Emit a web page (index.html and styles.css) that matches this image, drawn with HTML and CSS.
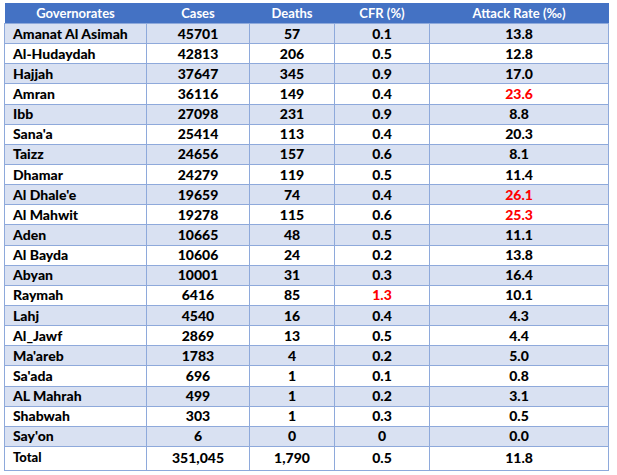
FILE: index.html
```html
<!DOCTYPE html>
<html>
<head>
<meta charset="utf-8">
<link rel="stylesheet" href="styles.css">
</head>
<body>
<table class="data">
  <colgroup>
    <col class="c-name"><col class="c-cases"><col class="c-deaths"><col class="c-cfr"><col class="c-ar">
  </colgroup>
  <thead>
    <tr class="head">
      <th>Governorates</th><th>Cases</th><th>Deaths</th><th>CFR (%)</th><th>Attack Rate (‰)</th>
    </tr>
  </thead>
  <tbody>
    <tr class="band"><td>Amanat Al Asimah</td><td>45701</td><td>57</td><td>0.1</td><td>13.8</td></tr>
    <tr><td>Al-Hudaydah</td><td>42813</td><td>206</td><td>0.5</td><td>12.8</td></tr>
    <tr class="band"><td>Hajjah</td><td>37647</td><td>345</td><td>0.9</td><td>17.0</td></tr>
    <tr><td>Amran</td><td>36116</td><td>149</td><td>0.4</td><td class="hot">23.6</td></tr>
    <tr class="band"><td>Ibb</td><td>27098</td><td>231</td><td>0.9</td><td>8.8</td></tr>
    <tr><td>Sana'a</td><td>25414</td><td>113</td><td>0.4</td><td>20.3</td></tr>
    <tr class="band"><td>Taizz</td><td>24656</td><td>157</td><td>0.6</td><td>8.1</td></tr>
    <tr><td>Dhamar</td><td>24279</td><td>119</td><td>0.5</td><td>11.4</td></tr>
    <tr class="band"><td>Al Dhale'e</td><td>19659</td><td>74</td><td>0.4</td><td class="hot">26.1</td></tr>
    <tr><td>Al Mahwit</td><td>19278</td><td>115</td><td>0.6</td><td class="hot">25.3</td></tr>
    <tr class="band"><td>Aden</td><td>10665</td><td>48</td><td>0.5</td><td>11.1</td></tr>
    <tr><td>Al Bayda</td><td>10606</td><td>24</td><td>0.2</td><td>13.8</td></tr>
    <tr class="band"><td>Abyan</td><td>10001</td><td>31</td><td>0.3</td><td>16.4</td></tr>
    <tr><td>Raymah</td><td>6416</td><td>85</td><td class="hot">1.3</td><td>10.1</td></tr>
    <tr class="band"><td>Lahj</td><td>4540</td><td>16</td><td>0.4</td><td>4.3</td></tr>
    <tr><td>Al_Jawf</td><td>2869</td><td>13</td><td>0.5</td><td>4.4</td></tr>
    <tr class="band"><td>Ma'areb</td><td>1783</td><td>4</td><td>0.2</td><td>5.0</td></tr>
    <tr><td>Sa'ada</td><td>696</td><td>1</td><td>0.1</td><td>0.8</td></tr>
    <tr class="band"><td>AL Mahrah</td><td>499</td><td>1</td><td>0.2</td><td>3.1</td></tr>
    <tr><td>Shabwah</td><td>303</td><td>1</td><td>0.3</td><td>0.5</td></tr>
    <tr class="band"><td>Say'on</td><td>6</td><td>0</td><td>0</td><td>0.0</td></tr>
    <tr class="total"><td>Total</td><td>351,045</td><td>1,790</td><td>0.5</td><td>11.8</td></tr>
  </tbody>
</table>
</body>
</html>
```

FILE: styles.css
```css
html, body {
  margin: 0;
  padding: 0;
  background: #ffffff;
}

body {
  padding: 3px 0 0 4px;
  font-family: Lato, "Open Sans", "Liberation Sans", sans-serif;
  color: #000000;
}

.data {
  border-collapse: collapse;
  table-layout: fixed;
  width: 604px;
  font-weight: 900;
  font-size: 14px;
}

.c-name { width: 142px; }
.c-cases { width: 103px; }
.c-deaths { width: 85px; }
.c-cfr { width: 95px; }
.c-ar { width: 179px; }

.head th {
  background: #4472c4;
  color: #ffffff;
  font-size: 13px;
  font-weight: 700;
  height: 20px;
  padding: 0;
  text-align: center;
  vertical-align: middle;
  border: 0;
}

.data td {
  border: 1px solid #8ea9db;
  height: 19.15px;
  padding: 0;
  text-align: center;
  vertical-align: middle;
  line-height: 16px;
  background: #ffffff;
}

.data td:first-child {
  text-align: left;
  padding-left: 8px;
}

.data tr.band td {
  background: #d9e1f2;
}

.data td.hot {
  color: #ff0000;
}

.data tr.total td {
  height: 21px;
}

.data tr.total td:first-child {
  font-size: 13px;
  vertical-align: top;
  padding-top: 2px;
}
```
